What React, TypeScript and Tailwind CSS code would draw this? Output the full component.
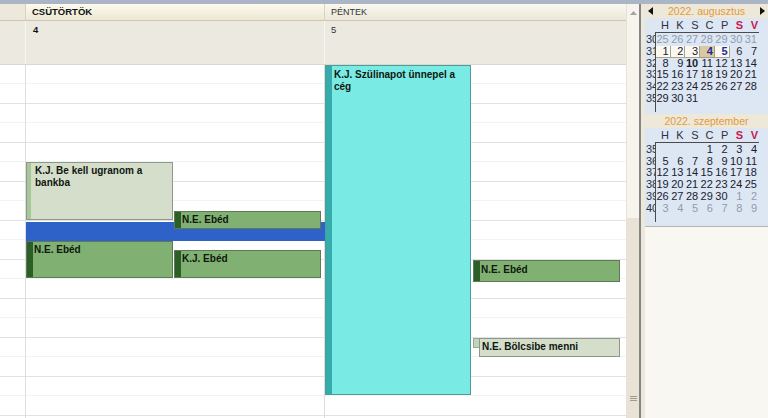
import type { ReactNode } from 'react'

type Tone = 'sage' | 'green' | 'cyan'

const TONES: Record<Tone, { box: string; bar: string }> = {
  sage: { box: 'bg-[#d5ddcb] border-[#8d9889]', bar: 'w-[4px] bg-[#a6c79a]' },
  green: { box: 'bg-[#80b172] border-[#5d7a56]', bar: 'w-[6px] bg-[#2c5e27]' },
  cyan: { box: 'bg-[#79ebe4] border-[#4e9c98]', bar: 'w-[6px] bg-[#36abab]' },
}

const SLOTS = Array.from({ length: 9 }, (_, i) => i)

function Slots() {
  return (
    <div className="flex flex-col">
      {SLOTS.map(i => (
        <div key={i} className="h-[39px] border-b border-[#e2e2e2]">
          <div className="h-[19px] border-b border-[#f3f3f3]" />
        </div>
      ))}
    </div>
  )
}

function Ev({ pos, tone, pad = 'pl-[2px]', children }: { pos: string; tone: Tone; pad?: string; children?: ReactNode }) {
  const t = TONES[tone]
  return (
    <div className={`absolute flex overflow-hidden border ${t.box} ${pos}`}>
      <div className={`shrink-0 ${t.bar}`} />
      <div className={`pt-[2px] text-[10px] font-bold leading-[12px] text-[#0f170f] ${pad}`}>{children}</div>
    </div>
  )
}

type Day = { d: number | null; m?: boolean; b?: boolean; box?: 'w' | 't'; blue?: boolean }

const n = (d: number, extra: Partial<Day> = {}): Day => ({ d, ...extra })
const range = (a: number, b: number, extra: Partial<Day> = {}) =>
  Array.from({ length: b - a + 1 }, (_, i) => n(a + i, extra))

const AUG: Day[][] = [
  range(25, 31, { m: true }),
  [n(1, { box: 'w' }), n(2, { box: 'w' }), n(3, { box: 'w' }), n(4, { box: 't', blue: true }), n(5, { box: 'w', blue: true }), n(6), n(7)],
  [n(8), n(9), n(10, { b: true }), ...range(11, 14)],
  range(15, 21),
  range(22, 28),
  [...range(29, 31), { d: null }, { d: null }, { d: null }, { d: null }],
]

const SEP: Day[][] = [
  [{ d: null }, { d: null }, { d: null }, ...range(1, 4)],
  range(5, 11),
  range(12, 18),
  range(19, 25),
  [...range(26, 30), ...range(1, 2, { m: true })],
  range(3, 9, { m: true }),
]

const DOW = ['H', 'K', 'S', 'C', 'P', 'S', 'V']

function MonthCal({ title, weeks, rows, arrows }: { title: string; weeks: number[]; rows: Day[][]; arrows?: boolean }) {
  return (
    <div className="bg-[#dce7f3]">
      <div className="flex h-[14px] items-center justify-between bg-[#eee8d9] px-[3px]">
        <svg width="5" height="8" viewBox="0 0 5 8" className={arrows ? '' : 'invisible'}>
          <polygon points="5,0 0,4 5,8" fill="#111" />
        </svg>
        <span className="text-[10.5px] leading-[14px] text-[#e39a3b]">{title}</span>
        <svg width="5" height="8" viewBox="0 0 5 8" className={arrows ? '' : 'invisible'}>
          <polygon points="0,0 5,4 0,8" fill="#111" />
        </svg>
      </div>
      <div className="flex h-[14px] items-center">
        <div className="w-[10px]" />
        <div className="grid w-[104px] grid-cols-7">
          {DOW.map((l, i) => (
            <span
              key={i}
              className={`pr-[1px] text-right text-[11px] leading-[14px] ${i > 4 ? 'font-bold text-[#c5174f]' : 'text-[#2a3040]'}`}
            >
              {l}
            </span>
          ))}
        </div>
      </div>
      <div className="flex pb-[2px]">
        <div className="w-[10px] overflow-hidden pl-[1px] pt-[2px]">
          {weeks.map(w => (
            <div key={w} className="h-[11.8px] text-[11px] leading-[11.8px] text-[#2c3240]">
              {w}
            </div>
          ))}
        </div>
        <div className="w-[104px] border-l border-t border-[#4b4b4b] pb-[7px] pt-[1px]">
          {rows.map((r, ri) => (
            <div key={ri} className="grid h-[11.8px] grid-cols-7">
              {r.map((c, ci) => (
                <span
                  key={ci}
                  className={[
                    'pr-[2px] text-right text-[11px] leading-[11.8px]',
                    c.m ? 'text-[#8e9bb0]' : 'text-[#1a2030]',
                    c.b ? 'font-bold' : '',
                    c.blue ? 'font-bold text-[#1b2a9c]' : '',
                    c.box === 'w' ? 'bg-[#faf8f1] shadow-[inset_-1px_-1px_0_#aaa392]' : '',
                    c.box === 't' ? 'bg-[#d8c9a2] shadow-[inset_-1px_-1px_0_#a89a76]' : '',
                  ].join(' ')}
                >
                  {c.d ?? ''}
                </span>
              ))}
            </div>
          ))}
        </div>
      </div>
    </div>
  )
}

export default function App() {
  return (
    <div className="flex h-[418px] w-[768px] flex-col overflow-hidden bg-white font-['Liberation_Sans',Arial,sans-serif] text-[#111]">
      <div className="h-[4px] shrink-0 bg-[#aab5c5]" />
      <div className="flex min-h-0 flex-1">
        {/* day view */}
        <div className="flex w-[626px] flex-col">
          <div className="flex h-[17px] shrink-0 border-b border-[#cbc6b6]">
            <div className="w-[26px] border-r border-[#d6d2c6] bg-[#ece8dc]" />
            <div className="w-[299px] border-r border-[#d6d2c6] bg-gradient-to-b from-[#fdfbef] to-[#ede7d2] pl-[6px] text-[9.5px] font-bold leading-[16px]">
              CSÜTÖRTÖK
            </div>
            <div className="flex-1 bg-gradient-to-b from-[#faf8f0] to-[#ebe7d8] pl-[6px] text-[9px] leading-[16px] text-[#333]">
              PÉNTEK
            </div>
          </div>
          <div className="flex h-[44px] shrink-0 border-b border-[#dcd8cf] bg-[#ece9e1]">
            <div className="w-[26px] border-r border-[#f7f5ef]" />
            <div className="w-[299px] border-r border-[#f7f5ef] pl-[7px] pt-[3px] text-[9.5px] font-bold leading-[11px]">4</div>
            <div className="flex-1 pl-[6px] pt-[3px] text-[9.5px] leading-[11px] text-[#333]">5</div>
          </div>
          <div className="flex min-h-0 flex-1">
            <div className="w-[26px] border-r border-[#dedede]">
              <Slots />
            </div>
            <div className="relative w-[299px] border-r border-[#dedede]">
              <Slots />
              <Ev pos="left-0 top-[97px] w-[147px] h-[58px]" tone="sage" pad="pl-[4px]">
                K.J. Be kell ugranom a bankba
              </Ev>
              <div className="absolute left-0 top-[157px] h-[19px] w-[299px] bg-[#2f62c9]" />
              <Ev pos="left-[148px] top-[146px] w-[147px] h-[18px]" tone="green" pad="pl-[1px]">
                N.E. Ebéd
              </Ev>
              <Ev pos="left-0 top-[176px] w-[147px] h-[37px]" tone="green" pad="pl-[1px]">
                N.E. Ebéd
              </Ev>
              <Ev pos="left-[148px] top-[185px] w-[147px] h-[28px]" tone="green" pad="pl-[1px]">
                K.J. Ebéd
              </Ev>
            </div>
            <div className="relative flex-1">
              <Slots />
              <Ev pos="left-0 top-0 w-[146px] h-[330px]" tone="cyan" pad="pl-[2px] pt-[3px]">
                K.J. Szülinapot ünnepel a cég
              </Ev>
              <Ev pos="left-[148px] top-[195px] w-[147px] h-[22px]" tone="green" pad="pl-[1px] pt-[3px]">
                N.E. Ebéd
              </Ev>
              <div className="absolute left-[148px] top-[273px] h-[10px] w-[7px] border border-r-0 border-[#9aa896] bg-[#bfd4b8]" />
              <div className="absolute left-[154px] top-[273px] h-[19px] w-[141px] border border-[#8d9889] bg-[#d5ddcb] pl-[2px] pt-[2px] text-[10px] font-bold leading-[12px] text-[#0f170f]">
                N.E. Bölcsibe menni
              </div>
            </div>
          </div>
        </div>

        {/* scrollbar */}
        <div className="flex w-[13px] flex-col border-l border-[#e6e2d6] bg-[#f6f4ec]">
          <div className="flex h-[17px] items-center justify-center">
            <svg width="7" height="4" viewBox="0 0 7 4">
              <polygon points="0,4 3.5,0 7,4" fill="#a3a3a3" />
            </svg>
          </div>
          <div className="h-[197px]" />
          <div className="flex flex-1 items-end justify-center bg-[#e8e3d5] pb-[17px]">
            <div className="flex flex-col gap-[1px]">
              <div className="h-[1px] w-[7px] bg-[#a39c8c]" />
              <div className="h-[1px] w-[7px] bg-[#a39c8c]" />
              <div className="h-[1px] w-[7px] bg-[#a39c8c]" />
            </div>
          </div>
        </div>

        {/* splitter */}
        <div className="w-[6px] border-l-2 border-[#858585] bg-[#ece9dc]" />

        {/* mini calendars */}
        <div className="flex w-[123px] flex-col">
          <MonthCal title="2022. augusztus" weeks={[30, 31, 32, 33, 34, 35]} rows={AUG} arrows />
          <MonthCal title="2022. szeptember" weeks={[35, 36, 37, 38, 39, 40]} rows={SEP} />
          <div className="h-[2px] bg-[#dce7f3]" />
          <div className="flex-1 border-t border-[#b9b5aa] bg-[#f9f7f2]" />
        </div>
      </div>
    </div>
  )
}
